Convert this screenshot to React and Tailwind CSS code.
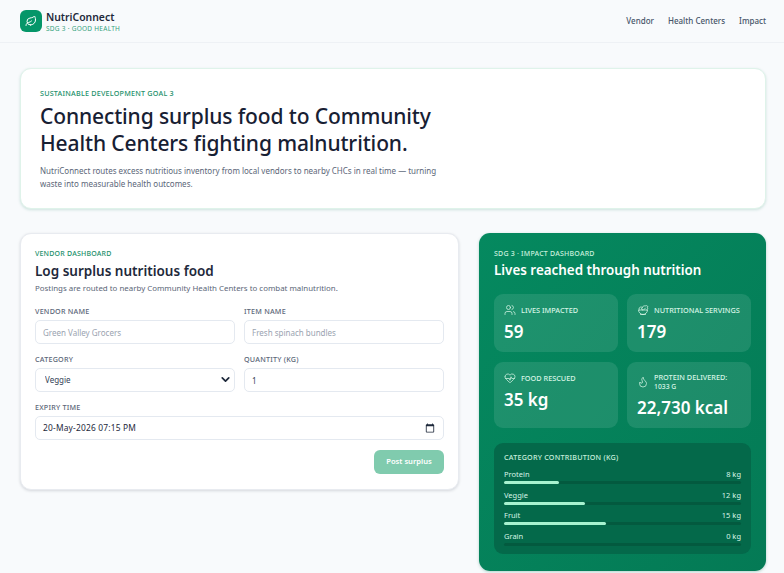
import React from "react";
import { Leaf, Users, Salad, HeartPulse, Flame, ChevronDown } from "lucide-react";

const categories = [
  { name: "Protein", kg: 8, width: "23%" },
  { name: "Veggie", kg: 12, width: "34%" },
  { name: "Fruit", kg: 15, width: "43%" },
  { name: "Grain", kg: 0, width: "0%" },
];

function Label({ children }) {
  return <div className="mb-1 text-[7.2px] leading-[10px] font-medium tracking-[0.03em] text-[#5b6678] uppercase">{children}</div>;
}

function Field({ label, placeholder, value }) {
  return (
    <div>
      <Label>{label}</Label>
      <input
        readOnly
        placeholder={placeholder}
        value={value || ""}
        className="block h-6 w-full rounded-[5px] border border-[#e4e9f0] bg-white px-[7px] text-[8px] text-[#334155] outline-none placeholder:text-[#9aa3b0]"
      />
    </div>
  );
}

function Stat({ icon: Icon, label, sub, value }) {
  return (
    <div className="rounded-[9px] bg-white/10 px-[10px] pt-[10px] pb-[9px]">
      <div className="flex min-h-[12px] items-center gap-[5px] text-[7.3px] leading-[10px] font-medium text-[#d6f5e6]">
        <Icon size={12} strokeWidth={1.5} className="shrink-0" />
        <div>
          {label}
          {sub && <div className="text-[6.8px]">{sub}</div>}
        </div>
      </div>
      <div className="mt-1 text-[17px] leading-[23px] font-semibold text-white">{value}</div>
    </div>
  );
}

export default function App() {
  return (
    <div className="h-[573px] overflow-hidden bg-[#f8fafc] font-['Noto_Sans',sans-serif]">
      <header className="flex h-[43px] items-center justify-between border-b border-[#eef1f5] pr-[18px] pl-5">
        <div className="flex items-center gap-[4px]">
          <div className="flex h-[22px] w-[22px] items-center justify-center rounded-[6px] bg-[#059669] text-white">
            <Leaf size={12} strokeWidth={2} />
          </div>
          <div>
            <div className="text-[10.4px] leading-[14px] font-semibold text-[#1e293b]">NutriConnect</div>
            <div className="text-[6.5px] leading-[9px] tracking-[0.04em] text-[#34a27c]">SDG 3 · GOOD HEALTH</div>
          </div>
        </div>
        <nav className="flex gap-[14px] text-[8px] font-medium text-[#475569]">
          <span>Vendor</span>
          <span>Health Centers</span>
          <span>Impact</span>
        </nav>
      </header>

      <main className="pt-[25px] pr-[18px] pl-5">
        <section className="h-[141px] rounded-[11px] border border-[#dff3ea] bg-white px-[19px] pt-[19px] shadow-[0_1px_3px_rgba(16,120,90,0.18)]">
          <div className="text-[7.2px] leading-[10px] font-medium tracking-[0.03em] text-[#23906b]">SUSTAINABLE DEVELOPMENT GOAL 3</div>
          <h1 className="mt-[5px] w-[420px] text-[21px] leading-[27px] font-medium tracking-[-0.12px] text-[#172033]">Connecting surplus food to Community Health Centers fighting malnutrition.</h1>
          <p className="mt-[7px] w-[400px] text-[8px] leading-[13px] text-[#5b6678]">NutriConnect routes excess nutritious inventory from local vendors to nearby CHCs in real time — turning waste into measurable health outcomes.</p>
        </section>

        <div className="mt-6 grid grid-cols-[439px_287px] items-start gap-5">
          <section className="h-[257px] rounded-[11px] border border-[#e8ebf0] bg-white px-[14px] pt-[15px] shadow-[0_1px_3px_rgba(15,23,42,0.15)]">
            <div className="text-[7px] leading-[10px] font-medium tracking-[0.03em] text-[#23906b]">VENDOR DASHBOARD</div>
            <h2 className="mt-[2px] text-[13.5px] leading-[20px] font-semibold text-[#1e293b]">Log surplus nutritious food</h2>
            <p className="mt-[1px] text-[7.9px] leading-[12px] text-[#5b6678]">Postings are routed to nearby Community Health Centers to combat malnutrition.</p>

            <div className="mt-3 grid grid-cols-2 gap-x-[9px] gap-y-[10px]">
              <Field label="Vendor name" placeholder="Green Valley Grocers" />
              <Field label="Item name" placeholder="Fresh spinach bundles" />
              <div>
                <Label>Category</Label>
                <div className="relative">
                  <select className="block h-6 w-full appearance-none rounded-[5px] border border-[#e4e9f0] bg-white px-[9px] text-[8px] text-[#334155] outline-none">
                    <option>Veggie</option>
                  </select>
                  <ChevronDown size={13} strokeWidth={3.2} className="absolute top-[5px] right-[3px] text-[#1e293b]" />
                </div>
              </div>
              <Field label="Quantity (kg)" value="1" />
              <div className="col-span-2">
                <Label>Expiry time</Label>
                <div className="flex h-6 items-center justify-between rounded-[5px] border border-[#e4e9f0] bg-white pr-[8px] pl-[7px] text-[8.4px] tracking-[0.2px] text-[#1e293b]">
                  <span>20-May-2026 07:15 PM</span>
                  <svg width="10" height="10" viewBox="0 0 24 24" fill="currentColor">
                    <path d="M20 3h-1V1h-2v2H7V1H5v2H4c-1.1 0-2 .9-2 2v16c0 1.1.9 2 2 2h16c1.1 0 2-.9 2-2V5c0-1.1-.9-2-2-2zm0 18H4V8h16v13z" />
                  </svg>
                </div>
              </div>
            </div>

            <div className="mt-[10px] flex justify-end">
              <button className="h-6 w-[70px] rounded-[6px] bg-[#80cbae] text-[7.6px] font-semibold text-white">Post surplus</button>
            </div>
          </section>

          <section className="h-[338px] rounded-[11px] bg-gradient-to-br from-[#05895f] to-[#047a55] px-[15px] pt-4 shadow-[0_1px_3px_rgba(16,120,90,0.3)]">
            <div className="text-[7px] leading-[10px] font-medium tracking-[0.03em] text-[#c7efdc]">SDG 3 · IMPACT DASHBOARD</div>
            <h2 className="mt-[1px] text-[13.4px] leading-[20px] font-semibold text-white">Lives reached through nutrition</h2>

            <div className="mt-[14px] grid grid-cols-2 gap-x-[9px] gap-y-[10px]">
              <Stat icon={Users} label="LIVES IMPACTED" value="59" />
              <Stat icon={Salad} label="NUTRITIONAL SERVINGS" value="179" />
              <Stat icon={HeartPulse} label="FOOD RESCUED" value="35 kg" />
              <Stat icon={Flame} label="PROTEIN DELIVERED:" sub="1033 G" value="22,730 kcal" />
            </div>

            <div className="mt-[15px] rounded-[9px] bg-[#04694a] px-[10px] pt-[9px] pb-2">
              <div className="text-[7.2px] leading-[10px] font-medium tracking-[0.03em] text-[#c7efdc]">CATEGORY CONTRIBUTION (KG)</div>
              <div className="mt-[6px] flex flex-col gap-[4.7px]">
                {categories.map((c) => (
                  <div key={c.name}>
                    <div className="flex justify-between text-[7.5px] leading-[12px] text-[#d6f5e6]">
                      <span>{c.name}</span>
                      <span>{c.kg} kg</span>
                    </div>
                    <div className="mt-[1px] h-[3px] rounded-full bg-[#035a3f]">
                      <div className="h-full rounded-full bg-[#a7f3d0]" style={{ width: c.width }} />
                    </div>
                  </div>
                ))}
              </div>
            </div>
          </section>
        </div>
      </main>
    </div>
  );
}
